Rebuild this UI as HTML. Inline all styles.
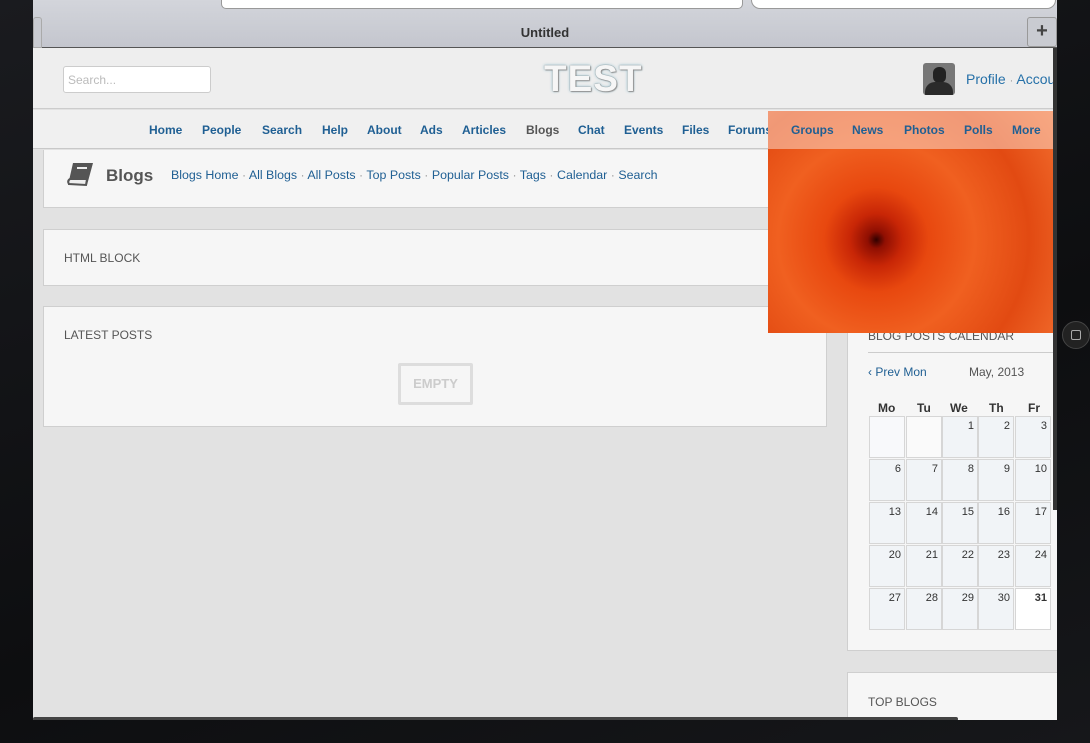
<!DOCTYPE html>
<html><head><meta charset="utf-8"><style>
*{margin:0;padding:0;box-sizing:border-box}
body{width:1090px;height:743px;overflow:hidden;background:#101114;font-family:"Liberation Sans",sans-serif;position:relative}
.a{position:absolute}
.bg{left:0;top:0;width:1090px;height:743px;background:linear-gradient(160deg,#1a1b1f 0%,#0d0e10 60%,#16171a 100%)}
.chrome{left:33px;top:0;width:1024px;height:48px;background:linear-gradient(#d3d5db,#c4c6ce);border-bottom:1px solid #555}
.page{left:33px;top:48px;width:1024px;height:672px;background:#e2e2e2;overflow:hidden}
.hdr{left:0;top:0;width:1024px;height:61px;background:#eeeeee;border-bottom:1px solid #ccc}
.nav{left:0;top:62px;width:1024px;height:39px;background:#f0f0f0;border-bottom:1px solid #c8c8c8}
.nav span{position:absolute;top:13px;font-size:12px;font-weight:bold;color:#1f5f93}
.box{background:#f6f6f6;border:1px solid #cfcfcf}
.t{font-size:12px;color:#555}
.cal div.c{position:absolute;width:36px;height:42px;background:#f1f4f7;border:1px solid #d6d6d6;font-size:11px;color:#333;text-align:right;padding:3px 3px}
.cal .h{position:absolute;font-size:12px;font-weight:bold;color:#333}
</style></head><body>
<div class="a bg"></div>
<div class="a chrome">
 <div class="a" style="left:188px;top:-10px;width:522px;height:19px;background:#fff;border:1px solid #999;border-radius:5px"></div>
 <div class="a" style="left:718px;top:-10px;width:305px;height:19px;background:#fff;border:1px solid #999;border-radius:9px"></div>
 <div class="a" style="left:0;top:17px;width:9px;height:31px;background:#c9cbd1;border:1px solid #aaa;border-radius:3px 3px 0 0"></div>
 <div class="a" style="left:0;top:25px;width:1024px;text-align:center;font-size:13px;font-weight:bold;color:#333">Untitled</div>
 <div class="a" style="left:994px;top:17px;width:30px;height:30px;background:#c9cbd1;border:1px solid #999;border-radius:3px;text-align:center;font-size:20px;font-weight:bold;color:#444;line-height:26px">+</div>
</div>
<div class="a page">
 <div class="a hdr">
  <div class="a" style="left:30px;top:18px;width:148px;height:27px;background:#fff;border:1px solid #ccc;border-radius:3px;font-size:12px;color:#bbb;padding:6px 4px">Search...</div>
  <div class="a" style="left:511px;top:10px;font-size:37px;font-weight:bold;color:#f6f6f6;letter-spacing:1px;text-shadow:0 0 1px #666,1px 1px 1px #999,0 0 3px #8bc">TEST</div>
  <div class="a" style="left:890px;top:15px;width:32px;height:32px;background:#777;border-radius:3px;overflow:hidden"><div class="a" style="left:10px;top:4px;width:13px;height:16px;background:#222;border-radius:6px"></div><div class="a" style="left:2px;top:19px;width:28px;height:16px;background:#2a2a2a;border-radius:10px 10px 0 0"></div></div>
  <div class="a" style="left:933px;top:23px;font-size:14px;color:#2570a8;white-space:nowrap">Profile <span style="color:#999;font-size:11px">·</span> Account</div>
 </div>
 <div class="a nav">
  <span style="left:116px">Home</span><span style="left:169px">People</span><span style="left:229px">Search</span><span style="left:289px">Help</span><span style="left:334px">About</span><span style="left:387px">Ads</span><span style="left:429px">Articles</span><span style="left:493px;color:#555">Blogs</span><span style="left:545px">Chat</span><span style="left:591px">Events</span><span style="left:649px">Files</span><span style="left:695px">Forums</span>
 </div>
 <div class="a box" style="left:10px;top:102px;width:1014px;height:58px;border-top:none">
  <svg class="a" style="left:22px;top:12px" width="30" height="26" viewBox="0 0 30 26"><path d="M7 1h20l-6 22H2z" fill="#555"/><path d="M3 22q-2-3 1-5h17l-1 6z" fill="#eee" stroke="#555" stroke-width="2"/><rect x="11" y="5" width="10" height="2" fill="#eee"/></svg>
  <div class="a" style="left:62px;top:16px;font-size:17px;font-weight:bold;color:#555">Blogs</div>
  <div class="a" style="left:127px;top:18px;font-size:12.4px;color:#1f5f93;white-space:nowrap">Blogs Home <span style="color:#999">·</span> All Blogs <span style="color:#999">·</span> All Posts <span style="color:#999">·</span> Top Posts <span style="color:#999">·</span> Popular Posts <span style="color:#999">·</span> Tags <span style="color:#999">·</span> Calendar <span style="color:#999">·</span> Search</div>
 </div>
 <div class="a box" style="left:10px;top:181px;width:784px;height:57px"><div class="a t" style="left:20px;top:21px">HTML BLOCK</div></div>
 <div class="a box" style="left:10px;top:258px;width:784px;height:121px"><div class="a t" style="left:20px;top:21px">LATEST POSTS</div>
  <div class="a" style="left:354px;top:56px;width:75px;height:42px;border:3px solid #ddd;border-radius:2px;font-size:13px;font-weight:bold;color:#ccc;text-align:center;line-height:36px">EMPTY</div></div>
 <div class="a box cal" style="left:814px;top:258px;width:215px;height:345px">
  <div class="a t" style="left:20px;top:22px">BLOG POSTS CALENDAR</div>
  <div class="a" style="left:20px;top:45px;width:195px;border-top:1px solid #ccc"></div>
 </div>
 <div class="a box" style="left:814px;top:624px;width:215px;height:60px"><div class="a t" style="left:20px;top:22px">TOP BLOGS</div></div>
 <div class="a" style="left:0;top:669px;width:925px;height:4px;background:#444;border-radius:2px"></div>
 <div class="a" style="left:1020px;top:0;width:4px;height:455px;background:#333"></div>
</div>
<div class="a cal" style="left:0;top:0;width:1090px;height:743px">
 <div class="a" style="left:868px;top:365px;font-size:12px;color:#1f5f93">‹ Prev Mon</div>
 <div class="a" style="left:969px;top:365px;font-size:12px;color:#555">May, 2013</div>
 <div class="h" style="left:878px;top:401px">Mo</div><div class="h" style="left:917px;top:401px">Tu</div><div class="h" style="left:950px;top:401px">We</div><div class="h" style="left:989px;top:401px">Th</div><div class="h" style="left:1028px;top:401px">Fr</div>
 <div class="c" style="left:869px;top:416px;background:#f8f9fb"></div><div class="c" style="left:906px;top:416px;background:#fafafa"></div><div class="c" style="left:942px;top:416px">1</div><div class="c" style="left:978px;top:416px">2</div><div class="c" style="left:1015px;top:416px">3</div>
 <div class="c" style="left:869px;top:459px">6</div><div class="c" style="left:906px;top:459px">7</div><div class="c" style="left:942px;top:459px">8</div><div class="c" style="left:978px;top:459px">9</div><div class="c" style="left:1015px;top:459px">10</div>
 <div class="c" style="left:869px;top:502px">13</div><div class="c" style="left:906px;top:502px">14</div><div class="c" style="left:942px;top:502px">15</div><div class="c" style="left:978px;top:502px">16</div><div class="c" style="left:1015px;top:502px">17</div>
 <div class="c" style="left:869px;top:545px">20</div><div class="c" style="left:906px;top:545px">21</div><div class="c" style="left:942px;top:545px">22</div><div class="c" style="left:978px;top:545px">23</div><div class="c" style="left:1015px;top:545px">24</div>
 <div class="c" style="left:869px;top:588px">27</div><div class="c" style="left:906px;top:588px">28</div><div class="c" style="left:942px;top:588px">29</div><div class="c" style="left:978px;top:588px">30</div><div class="c" style="left:1015px;top:588px;background:#fff;font-weight:bold">31</div>
</div>
<div class="a" style="left:768px;top:111px;width:285px;height:222px;background:radial-gradient(circle at 38% 58%,#300000 0,#900f02 4%,#c82606 12%,#e8480f 24%,#f06020 45%,#e24a12 70%,#f37030 100%)"></div>
<div class="a" style="left:768px;top:111px;width:285px;height:38px;background:rgba(250,205,185,0.6)"></div>
<div class="a" style="left:791px;top:123px;font-size:12px;font-weight:bold;color:#1f5f93;white-space:nowrap">Groups</div>
<div class="a" style="left:852px;top:123px;font-size:12px;font-weight:bold;color:#1f5f93">News</div>
<div class="a" style="left:904px;top:123px;font-size:12px;font-weight:bold;color:#1f5f93">Photos</div>
<div class="a" style="left:964px;top:123px;font-size:12px;font-weight:bold;color:#1f5f93">Polls</div>
<div class="a" style="left:1012px;top:123px;font-size:12px;font-weight:bold;color:#1f5f93">More</div>
<div class="a" style="left:1053px;top:48px;width:4px;height:462px;background:#333"></div>
<div class="a" style="left:1062px;top:321px;width:28px;height:28px;border-radius:14px;background:#222;border:1px solid #444"><div class="a" style="left:8px;top:8px;width:10px;height:10px;border:1.5px solid #aaa;border-radius:2px"></div></div>
</body></html>
